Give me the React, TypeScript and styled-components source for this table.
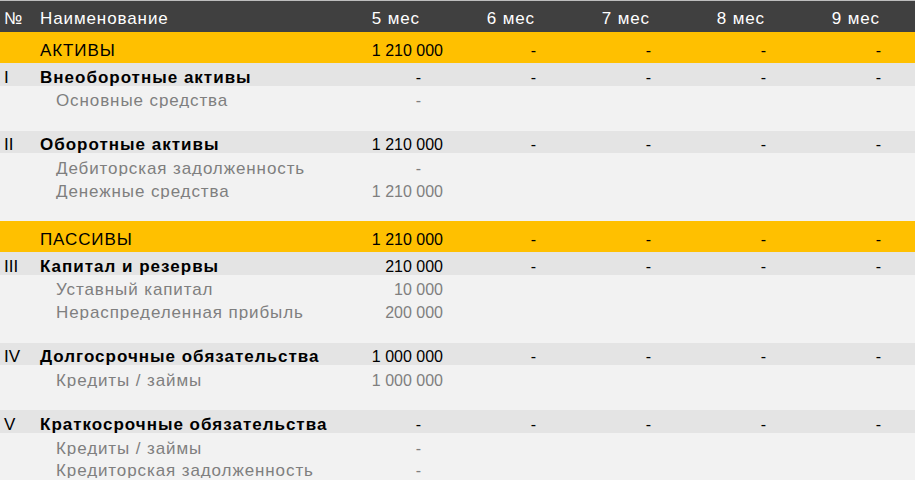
import React from 'react';
import styled, { createGlobalStyle } from 'styled-components';

const GlobalStyle = createGlobalStyle`
  html, body {
    margin: 0;
    padding: 0;
    background: #f2f2f2;
    font-family: "Liberation Sans", Arial, sans-serif;
  }
`;

type Kind = 'header' | 'section' | 'group' | 'item' | 'spacer';

const rowStyles: Record<Kind, { bg: string; fg: string; height: string; pad: string; lh: string }> = {
  header: { bg: '#404040', fg: '#ffffff', height: '31px', pad: '4px', lh: '18px' },
  section: { bg: '#ffc000', fg: '#000000', height: '31px', pad: '3px', lh: '18px' },
  group: { bg: '#e4e4e4', fg: '#000000', height: '22.6px', pad: '0px', lh: '16px' },
  item: { bg: '#f2f2f2', fg: '#7f7f7f', height: '22.6px', pad: '0px', lh: '15px' },
  spacer: { bg: '#f2f2f2', fg: '#7f7f7f', height: '22.6px', pad: '0px', lh: '15px' },
};

const Sheet = styled.div`
  width: 915px;
  display: flex;
  flex-direction: column;
  border-top: 1px solid #bdbdbd;
`;

const Row = styled.div<{ $kind: Kind }>`
  display: grid;
  grid-template-columns: 36px 1fr repeat(5, 115px);
  padding-right: 8px;
  height: ${(p) => rowStyles[p.$kind].height};
  background: ${(p) => rowStyles[p.$kind].bg};
  color: ${(p) => rowStyles[p.$kind].fg};
  font-size: 16px;
  line-height: ${(p) => rowStyles[p.$kind].lh};
  align-items: end;
  padding-bottom: ${(p) => rowStyles[p.$kind].pad};
  box-sizing: border-box;
  white-space: nowrap;
`;

const NumCell = styled.div`
  padding-left: 4px;
  font-size: 17px;
`;

// cyrillic captions render wider in the source sheet, hence size + spacing
const NameCell = styled.div<{ $indent?: boolean; $bold?: boolean }>`
  padding-left: ${(p) => (p.$indent ? '20px' : '4px')};
  font-size: 17px;
  font-weight: ${(p) => (p.$bold ? 700 : 400)};
  letter-spacing: ${(p) => (p.$bold ? '1px' : '0.9px')};
`;

const ValueCell = styled.div<{ $dash?: boolean }>`
  text-align: right;
  padding-right: ${(p) => (p.$dash ? '26px' : '4px')};
`;

const HeadCell = styled.div`
  text-align: right;
  padding-right: 27px;
  font-size: 17px;
  letter-spacing: 0.9px;
`;

type Line = {
  kind: Kind;
  num?: string;
  name?: string;
  values?: string[];
};

const months = ['5 мес', '6 мес', '7 мес', '8 мес', '9 мес'];
const dashes = (first: string) => [first, '-', '-', '-', '-'];

const lines: Line[] = [
  { kind: 'section', name: 'АКТИВЫ', values: dashes('1 210 000') },
  { kind: 'group', num: 'I', name: 'Внеоборотные активы', values: dashes('-') },
  { kind: 'item', name: 'Основные средства', values: ['-'] },
  { kind: 'spacer' },
  { kind: 'group', num: 'II', name: 'Оборотные активы', values: dashes('1 210 000') },
  { kind: 'item', name: 'Дебиторская задолженность', values: ['-'] },
  { kind: 'item', name: 'Денежные средства', values: ['1 210 000'] },
  { kind: 'spacer' },
  { kind: 'section', name: 'ПАССИВЫ', values: dashes('1 210 000') },
  { kind: 'group', num: 'III', name: 'Капитал и резервы', values: dashes('210 000') },
  { kind: 'item', name: 'Уставный капитал', values: ['10 000'] },
  { kind: 'item', name: 'Нераспределенная прибыль', values: ['200 000'] },
  { kind: 'spacer' },
  { kind: 'group', num: 'IV', name: 'Долгосрочные обязательства', values: dashes('1 000 000') },
  { kind: 'item', name: 'Кредиты / займы', values: ['1 000 000'] },
  { kind: 'spacer' },
  { kind: 'group', num: 'V', name: 'Краткосрочные обязательства', values: dashes('-') },
  { kind: 'item', name: 'Кредиты / займы', values: ['-'] },
  { kind: 'item', name: 'Кредиторская задолженность', values: ['-'] },
];

const App: React.FC = () => {
  return (
    <>
      <GlobalStyle />
      <Sheet>
        <Row $kind="header">
          <NumCell>№</NumCell>
          <NameCell>Наименование</NameCell>
          {months.map((m) => (
            <HeadCell key={m}>{m}</HeadCell>
          ))}
        </Row>
        {lines.map((line, i) => {
          const vals = line.values ?? [];
          return (
            <Row key={i} $kind={line.kind}>
              <NumCell>{line.num}</NumCell>
              <NameCell $indent={line.kind === 'item'} $bold={line.kind === 'group'}>
                {line.name}
              </NameCell>
              {months.map((m, j) => (
                <ValueCell key={m} $dash={vals[j] === '-'}>
                  {vals[j]}
                </ValueCell>
              ))}
            </Row>
          );
        })}
      </Sheet>
    </>
  );
};

export default App;
